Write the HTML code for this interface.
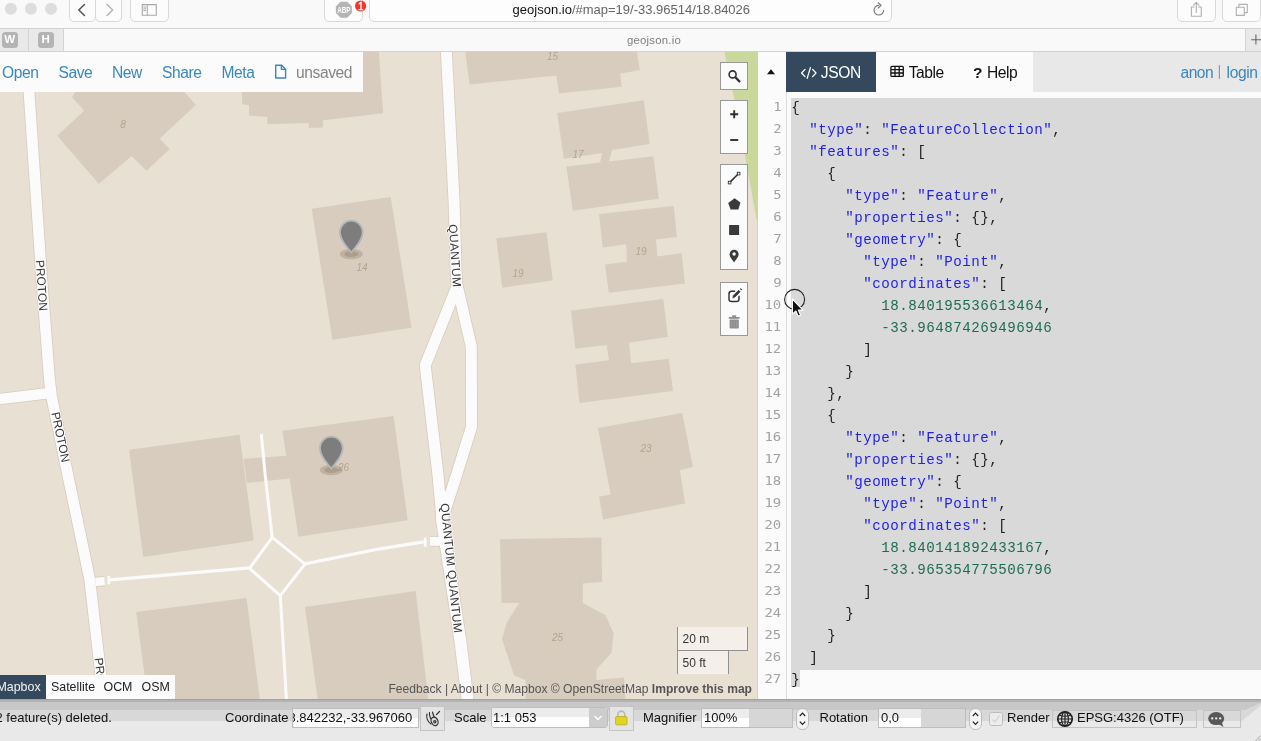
<!DOCTYPE html>
<html><head><meta charset="utf-8"><title>geojson.io</title>
<style>
*{box-sizing:border-box}
html,body{margin:0;padding:0}
body{width:1261px;height:741px;overflow:hidden;position:relative;background:#fbfbfb;font-family:"Liberation Sans",sans-serif;color:#222}
.abs{position:absolute}
/* browser chrome */
#chrome{position:absolute;left:0;top:0;width:1261px;height:52px;background:#f9f9f9}
#chrome .tb{position:absolute;top:-6px;height:27.5px;border:1px solid #d9d9d9;border-radius:5px;background:#fcfcfc}
#tbline{position:absolute;left:0;top:28px;width:1261px;height:1px;background:#d2d2d2}
#tabbar{position:absolute;left:0;top:29px;width:1261px;height:22px;background:#f9f9f9}
#tabline{position:absolute;left:0;top:51px;width:1261px;height:1px;background:#d2d2d2}
.pin{position:absolute;top:29px;height:22px;background:#e9e9e9;border-right:1px solid #d4d4d4}
.pinic{position:absolute;top:32.3px;width:15.5px;height:15.5px;border-radius:3.5px;background:#b4b4b4;color:#fff;font-weight:bold;font-size:11.5px;line-height:15.5px;text-align:center}
/* map */
#map{position:absolute;left:0;top:52px;width:758px;height:647px;overflow:hidden;background:#e8e0d3}
#mapsvg{position:absolute;left:0;top:0}
.sl{font-family:"Liberation Sans",sans-serif;fill:#3a3a3a;stroke:#fbfbfb;stroke-width:2px;paint-order:stroke;stroke-linejoin:round}
.hn{font-family:"Liberation Sans",sans-serif;font-style:italic;font-size:10px;fill:#b3a68f}
#filebar{position:absolute;left:0;top:0;width:363px;height:40px;background:#fbfbfb}
#filebar span{position:absolute;top:0.5px;line-height:40px;font-size:15.6px;color:#3887be;white-space:nowrap;letter-spacing:-0.42px}
.ctl{position:absolute;left:720px;width:28px;background:#fbfbfb;border:1px solid #999}
.ctl i{display:block;width:26px;height:26px;position:relative}
#layers{position:absolute;left:0;top:622.5px;height:24.5px;width:175px;background:#fbfbfb;font-size:12.4px;line-height:24.5px}
#layers span{position:absolute;top:0;height:24.5px;white-space:nowrap}
#attr{position:absolute;right:6px;top:629px;font-size:12.1px;line-height:16px;color:#555;white-space:nowrap}
.scale{position:absolute;left:677px;border:1px solid #888;border-top:none;background:rgba(255,255,255,0.5);font-size:12px;color:#333;padding-left:4.5px;line-height:22px;height:23.5px}
/* panel */
#panel{position:absolute;left:758px;top:52px;width:503px;height:647px;background:#fbfbfb}
#phead{position:absolute;left:0;top:0;width:503px;height:40px}
#phead .rest{position:absolute;left:275px;top:0;width:228px;height:40px;background:#e8e8e8}
#phead .tab{position:absolute;top:0;height:40px;line-height:41px;font-size:15.6px;white-space:nowrap;letter-spacing:-0.5px}
#gutline{position:absolute;left:28px;top:40px;width:1px;height:607px;background:#dcdcdc}
#sel{position:absolute;left:33px;top:46px;width:470px;height:572px;background:#d9d9d9}
#sel2{position:absolute;left:33px;top:618px;width:9px;height:16.6px;background:#d9d9d9}
#code{position:absolute;left:0;top:43.5px;width:503px}
.ln{height:22px;position:relative}
.ln .no{position:absolute;right:479.3px;top:0;line-height:22px;font-family:"DejaVu Sans Mono",monospace;font-size:12.7px;color:#a2a2a2;letter-spacing:0;transform:scaleX(1.1);transform-origin:100% 50%}
.ln pre{position:absolute;left:33.3px;top:1.1px;margin:0;font-family:"Liberation Mono",monospace;font-size:14.2px;letter-spacing:0.48px;line-height:22px;color:#222}
.s{color:#2222e8}.n{color:#1a6e4f}.p{color:#222}
/* status */
#status{position:absolute;left:0;top:699px;width:1261px;height:42px;background:#e9e9e9;font-size:13px;color:#111}
#status .band{position:absolute;left:0;top:0;width:1261px;height:23px;background:linear-gradient(#b9b9b9 0,#c6c6c6 5px,#d3d3d3 9px,#d3d3d3 100%)}
#status span.t{position:absolute;top:10.8px;line-height:16px;white-space:nowrap}
.inp{position:absolute;border:1px solid #bdbdbd;background:#fff;overflow:hidden}
.inp b{position:absolute;left:0;top:0;right:0;height:50%;background:#ececec}
.inp u{position:absolute;top:0;bottom:0;right:0;background:#d6d6d6}
.inp em{position:absolute;left:4px;top:0;font-style:normal;text-decoration:none;white-space:nowrap}
.sbtn{position:absolute;border:1px solid #c4c4c4;background:#e4e4e4}
.spin{position:absolute;width:13px;height:22px;border:1px solid #bcbcbc;border-radius:6px;background:#f4f4f4}
</style></head><body><div id="aa" style="position:absolute;left:0;top:0;width:1261px;height:741px;will-change:transform">

<!-- ===== browser chrome ===== -->
<div id="chrome">
  <svg class="abs" style="left:0;top:0" width="64" height="20"><circle cx="10.8" cy="8.7" r="6" fill="#dddddd"/><circle cx="30.9" cy="8.7" r="6" fill="#dddddd"/><circle cx="51" cy="8.7" r="6" fill="#dddddd"/></svg>
  <div class="tb" style="left:69px;width:26.5px"></div>
  <div class="tb" style="left:95px;width:27px"></div>
  <div class="tb" style="left:130px;width:38.5px"></div>
  <svg class="abs" style="left:69px;top:0" width="100" height="22" fill="none" stroke-linecap="round" stroke-linejoin="round">
    <path d="M15.5 4.5 L9.8 10 L15.5 15.5" stroke="#555" stroke-width="1.5"/>
    <path d="M38 4.5 L43.7 10 L38 15.5" stroke="#b5b5b5" stroke-width="1.5"/>
    <rect x="73.3" y="4.6" width="14" height="10.6" stroke="#a8a8a8" stroke-width="1.1"/>
    <path d="M78.3 4.6 V15.2 M74.8 7 h2 M74.8 8.8 h2 M74.8 10.6 h2" stroke="#a8a8a8" stroke-width="1"/>
  </svg>
  <div class="tb" style="left:324px;width:38.5px"></div>
  <svg class="abs" style="left:324px;top:0" width="46" height="22">
    <polygon points="340.6,1.8 347.2,1.8 351.9,6.5 351.9,13.1 347.2,17.8 340.6,17.8 335.9,13.1 335.9,6.5" transform="translate(-324 0)" fill="#b4b4b4"/>
    <text x="13.2" y="13" font-size="8.6" font-weight="bold" fill="#fff" textLength="13.4" lengthAdjust="spacingAndGlyphs" style="font-family:'Liberation Sans',sans-serif">ABP</text>
    <circle cx="36.6" cy="6" r="5.6" fill="#f5352b"/>
    <text x="36.8" y="9.6" font-size="10" fill="#fff" stroke="#fff" stroke-width="0.35" text-anchor="middle" style="font-family:'Liberation Sans',sans-serif">1</text>
  </svg>
  <div class="tb" style="left:369px;width:523px;background:#fdfdfd"></div>
  <div class="abs" style="left:512.6px;top:2px;font-size:13px;line-height:15.5px;white-space:nowrap;color:#666;letter-spacing:0"><span style="color:#111">geojson.io</span>/#map=19/-33.96514/18.84026</div>
  <svg class="abs" style="left:870px;top:1px" width="18" height="18" fill="none" stroke="#777" stroke-width="1.15" stroke-linecap="round"><path d="M13.6 9.2 a4.8 4.8 0 1 1 -4.8 -4.8"/><path d="M8.2 1.8 L11.1 4.4 L8.2 7" fill="none" stroke-linejoin="round"/></svg>
  <div class="tb" style="left:1177px;width:38.5px"></div>
  <div class="tb" style="left:1222px;width:38.5px"></div>
  <svg class="abs" style="left:1177px;top:0" width="84" height="22" fill="none" stroke="#b0b0b0" stroke-width="1.1" stroke-linejoin="round" stroke-linecap="round">
    <path d="M17 7 H14.4 V16.3 H24.3 V7 H21.6"/><path d="M19.3 12.5 V2.6 M16.6 5.2 L19.3 2.4 L22 5.2"/>
    <rect x="59.3" y="7.2" width="8" height="8.2"/><path d="M61.8 7.2 V4.4 H70.3 V12.6 H67.3"/>
  </svg>
  <div id="tbline"></div>
  <div id="tabbar"></div>
  <div class="pin" style="left:0;width:29px"></div>
  <div class="pin" style="left:29px;width:35px"></div>
  <div class="pinic" style="left:2px">W</div>
  <div class="pinic" style="left:38px">H</div>
  <div class="abs" style="left:627px;top:33px;font-size:11.4px;line-height:15px;color:#7d7d7d;letter-spacing:0.2px;white-space:nowrap">geojson.io</div>
  <div class="abs" style="left:1244.5px;top:29px;width:17px;height:22px;background:#e9e9e9;border-left:1px solid #d4d4d4"></div>
  <svg class="abs" style="left:1248px;top:30px" width="13" height="20" stroke="#666" stroke-width="1.1"><path d="M3.2 9.7 H13 M7.9 4.6 V14.6"/></svg>
  <div id="tabline"></div>
</div>

<!-- ===== map ===== -->
<div id="map">
<svg id="mapsvg" width="758" height="647" viewBox="0 52 758 647">
<rect x="0" y="52" width="758" height="647" fill="#e8e0d3"/>
<polygon points="724.5,52.0 758.0,52.0 758.0,219.7 756.6,219.7 748.0,172.0 737.0,112.0" fill="#cbd89b"/>
<polygon points="80.0,85.0 72.0,97.2 84.3,110.6 57.2,135.8 98.9,183.7 131.7,156.0 146.5,170.7 169.7,149.0 159.7,138.8 195.9,104.7 183.8,91.5 180.0,85.0" fill="#d8ccbe"/>
<polygon points="242.0,52.0 242.0,104.3 249.0,105.0 249.0,115.5 267.3,117.0 267.3,124.3 308.9,122.9 308.9,127.9 322.9,127.5 322.9,120.2 383.2,113.2 378.8,52.0" fill="#d8ccbe"/>
<polygon points="311.7,208.7 390.7,197.0 411.6,327.7 332.4,339.8" fill="#d8ccbe"/>
<polygon points="465.3,52.0 469.5,84.5 556.3,75.5 559.0,93.6 621.7,86.7 620.2,73.7 639.8,70.0 637.0,52.0" fill="#d8ccbe"/>
<polygon points="557.2,112.9 643.7,100.2 649.7,143.9 612.0,150.0 609.0,162.0 600.0,163.0 602.0,153.0 563.8,158.7" fill="#d8ccbe"/>
<polygon points="566.3,166.5 653.4,156.3 658.8,198.8 572.9,210.8" fill="#d8ccbe"/>
<polygon points="599.0,214.0 673.7,206.0 676.8,237.0 656.0,239.5 657.3,256.5 681.6,253.2 685.0,283.5 608.8,292.8 605.0,264.6 627.0,261.7 626.2,244.3 602.7,247.6" fill="#d8ccbe"/>
<polygon points="496.3,238.3 546.5,232.2 552.8,280.5 502.2,287.7" fill="#d8ccbe"/>
<polygon points="571.0,310.6 663.3,299.1 667.8,336.8 629.0,342.8 631.0,363.3 668.7,358.8 673.0,391.0 579.5,403.1 575.3,364.5 609.0,360.3 606.6,345.0 575.3,348.8" fill="#d8ccbe"/>
<polygon points="597.9,428.1 682.3,413.0 692.8,467.0 679.9,470.3 685.0,503.6 603.0,519.6 599.0,496.7 610.6,494.6" fill="#d8ccbe"/>
<polygon points="500.0,539.2 601.5,537.4 602.1,582.0 582.8,583.5 582.8,603.1 605.4,615.1 613.6,633.2 611.5,652.8 596.4,669.4 596.4,680.0 624.1,677.5 625.6,700.0 525.6,700.0 525.6,680.0 514.1,675.4 502.0,639.3 506.6,622.7 519.2,603.1 501.5,603.1" fill="#d8ccbe"/>
<polygon points="129.0,449.8 239.6,434.7 253.8,540.4 143.2,557.0" fill="#d8ccbe"/>
<polygon points="243.5,458.8 286.6,455.8 290.0,478.4 247.0,483.0" fill="#d8ccbe"/>
<polygon points="282.4,430.8 393.6,416.0 407.7,520.2 298.4,536.8" fill="#d8ccbe"/>
<polygon points="136.2,612.1 246.5,598.0 259.8,698.0 259.8,702.0 148.0,702.0" fill="#d8ccbe"/>
<polygon points="305.0,607.0 415.6,591.0 428.2,698.0 428.4,702.0 318.0,702.0" fill="#d8ccbe"/>
<polyline points="27.0,50.0 29.0,92.0 41.5,275.0 49.5,380.0 51.5,396.0 67.8,475.0 81.5,540.0 89.8,580.0 92.1,600.0 94.4,620.0 100.8,674.4 103.6,698.0 104.5,706.0" fill="none" stroke="#d6ccbc" stroke-width="12.4" stroke-linejoin="round"/>
<polyline points="-5.0,399.6 48.0,393.2" fill="none" stroke="#d6ccbc" stroke-width="12.1" stroke-linejoin="round"/>
<polyline points="446.2,48.0 454.0,200.0 456.2,275.0 457.0,286.5 425.2,365.4 438.0,475.0 442.0,520.0" fill="none" stroke="#d6ccbc" stroke-width="12.6" stroke-linejoin="round"/>
<polyline points="457.0,285.0 471.3,346.4 471.6,426.6 456.5,475.0 442.0,520.0" fill="none" stroke="#d6ccbc" stroke-width="12.6" stroke-linejoin="round"/>
<polyline points="441.6,516.0 442.0,520.0 445.3,541.8 460.4,641.2 467.4,698.0 468.4,706.0" fill="none" stroke="#d6ccbc" stroke-width="13.4" stroke-linejoin="round"/>
<polyline points="95.5,581.9 104.6,581.1" fill="none" stroke="#d6ccbc" stroke-width="10.1" stroke-linejoin="round"/>
<polyline points="430.0,541.3 441.0,541.3" fill="none" stroke="#d6ccbc" stroke-width="10.6" stroke-linejoin="round"/>
<polyline points="27.0,50.0 29.0,92.0 41.5,275.0 49.5,380.0 51.5,396.0 67.8,475.0 81.5,540.0 89.8,580.0 92.1,600.0 94.4,620.0 100.8,674.4 103.6,698.0 104.5,706.0" fill="none" stroke="#fbfbfb" stroke-width="10.8" stroke-linejoin="round"/>
<polyline points="-5.0,399.6 48.0,393.2" fill="none" stroke="#fbfbfb" stroke-width="10.5" stroke-linejoin="round"/>
<polyline points="446.2,48.0 454.0,200.0 456.2,275.0 457.0,286.5 425.2,365.4 438.0,475.0 442.0,520.0" fill="none" stroke="#fbfbfb" stroke-width="11.0" stroke-linejoin="round"/>
<polyline points="457.0,285.0 471.3,346.4 471.6,426.6 456.5,475.0 442.0,520.0" fill="none" stroke="#fbfbfb" stroke-width="11.0" stroke-linejoin="round"/>
<polyline points="441.6,516.0 442.0,520.0 445.3,541.8 460.4,641.2 467.4,698.0 468.4,706.0" fill="none" stroke="#fbfbfb" stroke-width="11.8" stroke-linejoin="round"/>
<polyline points="95.5,581.9 104.6,581.1" fill="none" stroke="#fbfbfb" stroke-width="8.5" stroke-linejoin="round"/>
<polyline points="430.0,541.3 441.0,541.3" fill="none" stroke="#fbfbfb" stroke-width="9.0" stroke-linejoin="round"/>
<polyline points="261.3,434.0 265.2,475.0 272.2,537.4" fill="none" stroke="#fbfbfb" stroke-width="3.0" stroke-linejoin="miter"/>
<polyline points="272.2,537.4 305.0,563.9 280.3,595.6 249.5,568.4 272.2,537.4" fill="none" stroke="#fbfbfb" stroke-width="3.0" stroke-linejoin="miter"/>
<polyline points="110.0,579.9 249.5,567.8" fill="none" stroke="#fbfbfb" stroke-width="3.2" stroke-linejoin="miter"/>
<polyline points="108.8,576.0 108.8,584.2" fill="none" stroke="#fbfbfb" stroke-width="2.6" stroke-linejoin="miter"/>
<polyline points="305.0,563.9 380.0,548.8 423.7,541.9" fill="none" stroke="#fbfbfb" stroke-width="3.2" stroke-linejoin="miter"/>
<polyline points="425.2,537.5 425.2,546.8" fill="none" stroke="#fbfbfb" stroke-width="2.8" stroke-linejoin="miter"/>
<polyline points="280.3,595.6 286.3,698.0 286.6,704.0" fill="none" stroke="#fbfbfb" stroke-width="3.0" stroke-linejoin="miter"/>
<text x="41.8" y="289.7" transform="rotate(86.2 41.8 285.4)" text-anchor="middle" font-size="12" letter-spacing="0" class="sl">PROTON</text>
<text x="60.8" y="441.3" transform="rotate(78.0 60.8 437.0)" text-anchor="middle" font-size="12" letter-spacing="0" class="sl">PROTON</text>
<text x="101.8" y="687.4" transform="rotate(83.3 101.8 683.1)" text-anchor="middle" font-size="12" letter-spacing="0" class="sl">PROTON</text>
<text x="455.2" y="260.1" transform="rotate(86.1 455.2 255.8)" text-anchor="middle" font-size="12" letter-spacing="0.4" class="sl">QUANTUM</text>
<text x="451.6" y="572.6" transform="rotate(84.0 451.6 568.3)" text-anchor="middle" font-size="12" letter-spacing="0.4" class="sl">QUANTUM QUANTUM</text>
<text x="123.0" y="128.0" class="hn" text-anchor="middle">8</text>
<text x="362.0" y="271.0" class="hn" text-anchor="middle">14</text>
<text x="552.5" y="60.0" class="hn" text-anchor="middle">15</text>
<text x="578.0" y="157.5" class="hn" text-anchor="middle">17</text>
<text x="518.0" y="277.0" class="hn" text-anchor="middle">19</text>
<text x="641.0" y="254.5" class="hn" text-anchor="middle">19</text>
<text x="646.0" y="451.5" class="hn" text-anchor="middle">23</text>
<text x="557.5" y="640.5" class="hn" text-anchor="middle">25</text>
<text x="343.5" y="470.5" class="hn" text-anchor="middle">26</text>
<rect x="757" y="52" width="1" height="647" fill="#d9cbbb" opacity="0.8"/>
</svg>
  <!-- markers -->
  <svg class="abs" style="left:335px;top:166px" width="34" height="46"><defs><filter id="mb" x="-20%" y="-50%" width="140%" height="200%"><feGaussianBlur stdDeviation="0.7"/></filter></defs><g filter="url(#mb)"><ellipse cx="16.3" cy="36" rx="11.6" ry="5.2" fill="#8a7460" opacity="0.3"/><ellipse cx="16.3" cy="36" rx="7" ry="3" fill="#7a6450" opacity="0.28"/></g><path d="M16.3 34.6 C13 29.5 4.9 23.6 4.9 14.1 A11.4 11.4 0 0 1 27.7 14.1 C27.7 23.6 19.6 29.5 16.3 34.6 Z" fill="#7d7d7d" stroke="#b4b6b9" stroke-width="1.8"/></svg>
  <svg class="abs" style="left:315px;top:382px" width="34" height="46"><g filter="url(#mb)"><ellipse cx="16.3" cy="36" rx="11.6" ry="5.2" fill="#8a7460" opacity="0.3"/><ellipse cx="16.3" cy="36" rx="7" ry="3" fill="#7a6450" opacity="0.28"/></g><path d="M16.3 34.6 C13 29.5 4.9 23.6 4.9 14.1 A11.4 11.4 0 0 1 27.7 14.1 C27.7 23.6 19.6 29.5 16.3 34.6 Z" fill="#7d7d7d" stroke="#b4b6b9" stroke-width="1.8"/></svg>

  <div id="filebar">
    <span style="left:2px">Open</span><span style="left:58.5px">Save</span><span style="left:112px">New</span><span style="left:162px">Share</span><span style="left:221.5px">Meta</span>
    <svg class="abs" style="left:274px;top:12px" width="14" height="16" fill="none" stroke="#3887be" stroke-width="1.4" stroke-linejoin="round"><path d="M1.7 1.2 H7.6 L11.6 5.2 V14 H1.7 Z"/><path d="M7.4 1.4 V5.4 H11.4"/></svg>
    <span style="left:296px;color:#858585">unsaved</span>
  </div>

  <!-- controls -->
  <div class="ctl" style="top:10px;height:28px"><i><svg width="26" height="26" fill="none" stroke="#333" stroke-width="2"><circle cx="11.6" cy="11.4" r="3.5" stroke-width="1.6"/><path d="M14.6 14.5 L18.4 18.4" stroke-width="2.3" stroke-linecap="round"/></svg></i></div>
  <div class="ctl" style="top:48px;height:54px"><i><svg width="26" height="26" stroke="#2e2e2e" stroke-width="1.9"><path d="M9.2 13.2 H17.2 M13.2 9.2 V17.2"/></svg></i><i><svg width="26" height="26" stroke="#2e2e2e" stroke-width="1.9"><path d="M9.2 13 H17.2"/></svg></i></div>
  <div class="ctl" style="top:112px;height:106px">
    <i><svg width="26" height="26" fill="none" stroke="#333"><path d="M8.8 17.4 L17.4 8.8" stroke-width="1.6"/><rect x="7.3" y="16.3" width="2.6" height="2.6" fill="#fbfbfb" stroke-width="0.9"/><rect x="16.3" y="7.3" width="2.6" height="2.6" fill="#fbfbfb" stroke-width="0.9"/></svg></i>
    <i><svg width="26" height="26"><polygon points="13.6,7.2 19.4,11.4 17.4,18.4 9.6,18.4 7.2,12" fill="#3a3a3a"/></svg></i>
    <i><svg width="26" height="26"><rect x="8.1" y="8" width="10" height="10" fill="#3a3a3a"/></svg></i>
    <i><svg width="26" height="26"><path d="M13.1 19.4 C11.6 16.6 8.6 14.4 8.6 11.2 A4.5 4.5 0 0 1 17.6 11.2 C17.6 14.4 14.6 16.6 13.1 19.4 Z" fill="#3a3a3a"/><circle cx="13.1" cy="11" r="1.7" fill="#fbfbfb"/></svg></i>
  </div>
  <div class="ctl" style="top:230px;height:54px">
    <i><svg width="26" height="26" fill="none" stroke="#333" stroke-width="1.45" stroke-linecap="round" stroke-linejoin="round"><path d="M13.6 8.3 H10.6 Q8 8.3 8 10.9 V15.9 Q8 18.5 10.6 18.5 H15.4 Q18 18.5 18 15.9 V13.2"/><path d="M11.8 14.7 L12.4 12.4 L17.6 7.2 L19.2 8.8 L14 14 Z" fill="#333" stroke-width="0.6"/><path d="M19.6 5.8 l0.9 0.9" stroke-width="1.1"/></svg></i>
    <i><svg width="26" height="26" fill="#8d8d8d"><rect x="8.6" y="10.6" width="9.2" height="9" rx="0.8"/><rect x="7.8" y="8" width="10.8" height="1.8"/><rect x="11.2" y="6.3" width="4" height="2"/><path d="M10.6 11.5 v7 M13.2 11.5 v7 M15.8 11.5 v7" stroke="#a5a5a5" stroke-width="0.8"/></svg></i>
  </div>

  <div class="scale" style="top:575px;width:71px;line-height:24px;border-color:#909090">20 m</div>
  <div class="scale" style="top:598.5px;width:52px;height:23.5px;border-bottom:none;line-height:24px;border-color:#909090">50 ft</div>
  <div id="attr">Feedback | About | © Mapbox © OpenStreetMap <b>Improve this map</b></div>
  <div id="layers"><span style="left:0;width:46px;background:#34495e;color:#f2f2f2;text-indent:-3.5px">Mapbox</span><span style="left:51px">Satellite</span><span style="left:103.5px">OCM</span><span style="left:141.5px">OSM</span></div>
</div>

<!-- ===== right panel ===== -->
<div id="panel">
  <div id="phead">
    <div class="rest"></div>
    <svg class="abs" style="left:7px;top:15px" width="12" height="10"><polygon points="6,2.2 10,7.2 2,7.2" fill="#111"/></svg>
    <div class="tab" style="left:28px;width:90px;background:#34495e;color:#fff"></div>
    <svg class="abs" style="left:41.8px;top:13.5px" width="18" height="14" fill="none" stroke="#fff" stroke-width="1.3" stroke-linecap="round" stroke-linejoin="round"><path d="M5 3.4 L1.6 7 L5 10.6 M12.6 3.4 L16 7 L12.6 10.6 M10.4 1.6 L7.2 12.4"/></svg>
    <div class="tab" style="left:62.7px;color:#fff;letter-spacing:-0.35px">JSON</div>
    <svg class="abs" style="left:132px;top:13px" width="15" height="13" fill="none" stroke="#111" stroke-width="1.3"><rect x="0.9" y="1.4" width="12.4" height="10" rx="1"/><path d="M0.9 4.7 H13.3 M0.9 8 H13.3 M5 1.4 V11.4 M9.2 1.4 V11.4"/></svg>
    <div class="tab" style="left:150.8px;color:#111">Table</div>
    <div class="tab" style="left:215px;color:#111;font-weight:bold;font-size:15.5px">?</div>
    <div class="tab" style="left:229px;color:#111">Help</div>
    <div class="tab" style="left:422.5px;color:#3887be">anon</div>
    <div class="tab" style="left:459.6px;color:#9a9a9a;font-size:14.5px;line-height:39px;letter-spacing:0">|</div>
    <div class="tab" style="left:468.6px;color:#3887be;letter-spacing:-0.4px">login</div>
  </div>
  <div id="gutline"></div>
  <div id="sel"></div><div id="sel2"></div>
  <div id="code">
<div class="ln"><span class="no">1</span><pre><span class="p">{</span></pre></div>
<div class="ln"><span class="no">2</span><pre>  <span class="s">&quot;type&quot;</span><span class="p">: </span><span class="s">&quot;FeatureCollection&quot;</span><span class="p">,</span></pre></div>
<div class="ln"><span class="no">3</span><pre>  <span class="s">&quot;features&quot;</span><span class="p">: [</span></pre></div>
<div class="ln"><span class="no">4</span><pre>    <span class="p">{</span></pre></div>
<div class="ln"><span class="no">5</span><pre>      <span class="s">&quot;type&quot;</span><span class="p">: </span><span class="s">&quot;Feature&quot;</span><span class="p">,</span></pre></div>
<div class="ln"><span class="no">6</span><pre>      <span class="s">&quot;properties&quot;</span><span class="p">: {},</span></pre></div>
<div class="ln"><span class="no">7</span><pre>      <span class="s">&quot;geometry&quot;</span><span class="p">: {</span></pre></div>
<div class="ln"><span class="no">8</span><pre>        <span class="s">&quot;type&quot;</span><span class="p">: </span><span class="s">&quot;Point&quot;</span><span class="p">,</span></pre></div>
<div class="ln"><span class="no">9</span><pre>        <span class="s">&quot;coordinates&quot;</span><span class="p">: [</span></pre></div>
<div class="ln"><span class="no">10</span><pre>          <span class="n">18.840195536613464</span><span class="p">,</span></pre></div>
<div class="ln"><span class="no">11</span><pre>          <span class="n">-33.964874269496946</span></pre></div>
<div class="ln"><span class="no">12</span><pre>        <span class="p">]</span></pre></div>
<div class="ln"><span class="no">13</span><pre>      <span class="p">}</span></pre></div>
<div class="ln"><span class="no">14</span><pre>    <span class="p">},</span></pre></div>
<div class="ln"><span class="no">15</span><pre>    <span class="p">{</span></pre></div>
<div class="ln"><span class="no">16</span><pre>      <span class="s">&quot;type&quot;</span><span class="p">: </span><span class="s">&quot;Feature&quot;</span><span class="p">,</span></pre></div>
<div class="ln"><span class="no">17</span><pre>      <span class="s">&quot;properties&quot;</span><span class="p">: {},</span></pre></div>
<div class="ln"><span class="no">18</span><pre>      <span class="s">&quot;geometry&quot;</span><span class="p">: {</span></pre></div>
<div class="ln"><span class="no">19</span><pre>        <span class="s">&quot;type&quot;</span><span class="p">: </span><span class="s">&quot;Point&quot;</span><span class="p">,</span></pre></div>
<div class="ln"><span class="no">20</span><pre>        <span class="s">&quot;coordinates&quot;</span><span class="p">: [</span></pre></div>
<div class="ln"><span class="no">21</span><pre>          <span class="n">18.840141892433167</span><span class="p">,</span></pre></div>
<div class="ln"><span class="no">22</span><pre>          <span class="n">-33.965354775506796</span></pre></div>
<div class="ln"><span class="no">23</span><pre>        <span class="p">]</span></pre></div>
<div class="ln"><span class="no">24</span><pre>      <span class="p">}</span></pre></div>
<div class="ln"><span class="no">25</span><pre>    <span class="p">}</span></pre></div>
<div class="ln"><span class="no">26</span><pre>  <span class="p">]</span></pre></div>
<div class="ln"><span class="no">27</span><pre><span class="p">}</span></pre></div>
  </div>
  <!-- cursor -->
  <svg class="abs" style="left:24px;top:235px" width="30" height="36"><circle cx="12.6" cy="12.4" r="10" fill="none" stroke="#222" stroke-width="1.1"/><path d="M10.4 12 V27.2 L13.9 24 L16.2 29.2 L18.6 28.2 L16.3 23.1 H21 Z" fill="#111" stroke="#fff" stroke-width="1.1" stroke-linejoin="round"/></svg>
</div>

<!-- ===== status bar ===== -->
<div id="status">
  <svg class="abs" style="left:0;top:0" width="1261" height="24"><rect x="0" y="0" width="1261" height="1.1" fill="#a2a2a2"/><rect x="0" y="1" width="1261" height="2.1" fill="#b3b3b3"/><polygon points="0,3 1261,3 1261,4 1245,11.6 0,11.6" fill="#c8c8c8"/><polygon points="0,11.6 1245,11.6 1261,4 1261,6.4 1241.7,21.9 0,21.9" fill="#d8d8d8"/></svg>
  <span class="t" style="left:-4.5px">2 feature(s) deleted.</span>
  <span class="t" style="left:225px">Coordinate</span>
  <div class="inp" style="left:292px;top:8.5px;width:126.5px;height:20.5px"><b></b><em style="left:-4.5px;line-height:17.5px">8.842232,-33.967060</em></div>
  <div class="sbtn" style="left:419.5px;top:6.5px;width:25.5px;height:25px"></div>
  <svg class="abs" style="left:422px;top:9px" width="22" height="22" fill="none" stroke="#333" stroke-width="1.2" stroke-linecap="round"><path d="M5 6 C4 9 5.5 14 9 16 M7.5 4.5 C7 8 9 12.5 12 14.5 M10.5 4 C11 7 12.5 10 15 12" /><ellipse cx="12.6" cy="13.4" rx="3.3" ry="4.4" transform="rotate(-25 12.6 13.4)" fill="#ddd"/><circle cx="12.8" cy="13.8" r="1.1"/><path d="M14.5 6.5 L17.5 3.5"/></svg>
  <span class="t" style="left:454px">Scale</span>
  <div class="inp" style="left:490.5px;top:7.5px;width:117px;height:21px;border-radius:3px"><b></b><u style="width:18px;background:#cdcdcd"></u><em style="line-height:19px;top:0.8px;left:1.5px">1:1 053</em>
    <svg class="abs" style="right:4px;top:6px" width="10" height="8" fill="none" stroke="#fff" stroke-width="1.3"><path d="M1.5 2 L5 5.5 L8.5 2"/></svg></div>
  <div class="sbtn" style="left:608.5px;top:6.5px;width:25.5px;height:25px"></div>
  <svg class="abs" style="left:613px;top:10px" width="18" height="18"><path d="M4.8 8 V5.6 A3.5 3.5 0 0 1 11.8 5.6 V8" fill="none" stroke="#b9b9b9" stroke-width="1.6"/><rect x="2.6" y="7.6" width="11.4" height="8.2" rx="1" fill="#e2d41f" stroke="#b5a91a" stroke-width="0.8"/></svg>
  <span class="t" style="left:643px">Magnifier</span>
  <div class="inp" style="left:701px;top:8.5px;width:91.5px;height:20.5px"><b></b><u style="width:43px"></u><em style="line-height:17.5px;left:2px">100%</em></div>
  <div class="spin" style="left:796px;top:8.5px"></div>
  <svg class="abs" style="left:796px;top:8.5px" width="13" height="22" fill="none" stroke="#222" stroke-width="1.2"><path d="M3.8 8 L6.5 5.2 L9.2 8 M3.8 13.6 L6.5 16.4 L9.2 13.6"/></svg>
  <span class="t" style="left:819.5px">Rotation</span>
  <div class="inp" style="left:878px;top:8.5px;width:87.5px;height:20.5px"><b></b><u style="width:43.5px"></u><em style="line-height:17.5px;left:2px">0,0</em></div>
  <div class="spin" style="left:969px;top:8.5px"></div>
  <svg class="abs" style="left:969px;top:8.5px" width="13" height="22" fill="none" stroke="#222" stroke-width="1.2"><path d="M3.8 8 L6.5 5.2 L9.2 8 M3.8 13.6 L6.5 16.4 L9.2 13.6"/></svg>
  <div class="abs" style="left:989px;top:12.5px;width:13.5px;height:14px;border:1px solid #bdbdbd;border-radius:2.5px;background:#ececec"></div>
  <svg class="abs" style="left:989px;top:12.5px" width="14" height="14" fill="none" stroke="#d2d2d2" stroke-width="1.3"><path d="M3.5 7.5 L6 10 L10.5 3.5"/></svg>
  <span class="t" style="left:1007px">Render</span>
  <div class="abs" style="left:1052px;top:11px;width:145px;height:17.5px;border:1px solid #c4c4c4;background:transparent"></div>
  <svg class="abs" style="left:1056px;top:10.5px" width="18" height="18" fill="none" stroke="#222" stroke-width="1.2"><circle cx="9" cy="9" r="7.2" stroke-width="1.7"/><ellipse cx="9" cy="9" rx="3.4" ry="7.2"/><path d="M1.8 9 H16.2 M9 1.8 V16.2 M3 5 Q9 7.5 15 5 M3 13 Q9 10.5 15 13"/></svg>
  <span class="t" style="left:1077px">EPSG:4326 (OTF)</span>
  <div class="abs" style="left:1203px;top:11px;width:38px;height:17.5px;border:1px solid #c4c4c4;background:transparent"></div>
  <svg class="abs" style="left:1206px;top:11px" width="22" height="20"><ellipse cx="10.2" cy="8.6" rx="8" ry="6.5" fill="#585858"/><path d="M11.5 13.5 L17.5 17 L15.5 11.5 Z" fill="#585858"/><circle cx="6.2" cy="8.4" r="1.15" fill="#f0f0f0"/><circle cx="10.2" cy="8.4" r="1.15" fill="#f0f0f0"/><circle cx="14.2" cy="8.4" r="1.15" fill="#f0f0f0"/></svg>
  <svg class="abs" style="left:1247px;top:28px" width="14" height="14" stroke="#aaa" stroke-width="1"><path d="M14 8.3 L8.3 14 M14 11.3 L11.3 14"/></svg>
</div>
</div></body></html>
